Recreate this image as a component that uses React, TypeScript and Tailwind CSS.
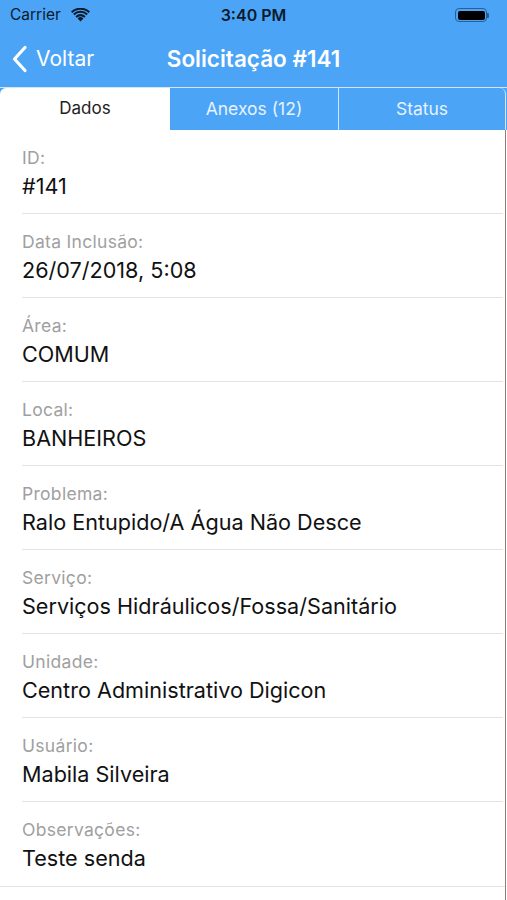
import React from "react";

const rows: { label: string; value: string }[] = [
  { label: "ID:", value: "#141" },
  { label: "Data Inclusão:", value: "26/07/2018, 5:08" },
  { label: "Área:", value: "COMUM" },
  { label: "Local:", value: "BANHEIROS" },
  { label: "Problema:", value: "Ralo Entupido/A Água Não Desce" },
  { label: "Serviço:", value: "Serviços Hidráulicos/Fossa/Sanitário" },
  { label: "Unidade:", value: "Centro Administrativo Digicon" },
  { label: "Usuário:", value: "Mabila Silveira" },
  { label: "Observações:", value: "Teste senda" },
];

function Wifi() {
  return (
    <svg width="19" height="14" viewBox="0 0 19 14">
      <path d="M9.5 13.5 L6.6 10.4 A4.2 4.2 0 0 1 12.4 10.4 Z" fill="#0b1b2b" />
      <path d="M4.4 8.2 A7.3 7.3 0 0 1 14.6 8.2 L13.2 9.7 A5.3 5.3 0 0 0 5.8 9.7 Z" fill="#0b1b2b" />
      <path d="M2.1 5.8 A10.6 10.6 0 0 1 16.9 5.8 L15.5 7.3 A8.6 8.6 0 0 0 3.5 7.3 Z" fill="#0b1b2b" />
      <path d="M0 3.5 A13.7 13.7 0 0 1 19 3.5 L17.6 5 A11.7 11.7 0 0 0 1.4 5 Z" fill="#0b1b2b" />
    </svg>
  );
}

export default function App() {
  return (
    <div
      className="w-[507px] h-[900px] bg-white overflow-hidden flex flex-col"
      style={{ fontFamily: 'Inter, "Liberation Sans", Arial, sans-serif' }}
    >
      <div className="bg-[#4ca4f7] flex flex-col">
        {/* status bar */}
        <div className="h-[30px] flex items-center relative px-[10px]">
          <div className="flex items-center gap-[10px]">
            <span className="text-[15.5px] text-[#0b1b2b]">Carrier</span>
            <Wifi />
          </div>
          <div className="absolute left-0 right-0 top-0 h-[30px] flex items-center justify-center pointer-events-none">
            <span className="text-[16px] font-semibold text-[#0b1b2b]">3:40 PM</span>
          </div>
          <div className="ml-auto mr-[8px] flex items-center">
            <div className="w-[32px] h-[14px] rounded-[4px] border border-[#2a5f96] p-[1.5px]">
              <div className="w-full h-full bg-black rounded-[2px]" />
            </div>
            <div className="w-[2px] h-[5px] bg-[#2a5f96] rounded-r-[1px]" />
          </div>
        </div>
        {/* nav bar */}
        <div className="h-[57px] relative flex items-center">
          <div className="flex items-center pl-[12px] gap-[8px] text-white">
            <svg width="16" height="28" viewBox="0 0 16 28">
              <path d="M13 2.5 L2.5 14 L13 25.5" fill="none" stroke="white" strokeWidth="3.2" strokeLinecap="round" strokeLinejoin="round" />
            </svg>
            <span className="text-[21px]">Voltar</span>
          </div>
          <div className="absolute inset-0 flex items-center justify-center pointer-events-none">
            <span className="text-[22.5px] font-semibold text-white">Solicitação #141</span>
          </div>
        </div>
        {/* tabs */}
        <div className="h-[43px] flex border-t border-[#cfe6fd]">
          <div className="w-[170px] bg-white rounded-tl-[6px] flex items-center justify-center text-[17px] text-[#222]">
            Dados
          </div>
          <div className="w-[169px] border-r border-[#cfe6fd] flex items-center justify-center text-[17.5px] text-[#e6f2fe]">
            Anexos (12)
          </div>
          <div className="w-[167px] border-r border-[#cfe6fd] rounded-tr-[6px] flex items-center justify-center text-[17.5px] text-[#e6f2fe]">
            Status
          </div>
        </div>
      </div>
      <div className="flex-1 flex">
        <div className="w-[505px] flex flex-col">
          {rows.map((r, i) => {
            const last = i === rows.length - 1;
            return (
              <div key={r.label} className={last ? "border-b border-[#e4e4e4]" : ""}>
                <div className={`ml-[22px] mr-[2px] h-[84px] pt-[17px] ${last ? "" : "border-b border-[#e4e4e4]"}`}>
                  <div className="text-[17.5px] tracking-[0.3px] leading-[22px] text-[#a0a0a0]">{r.label}</div>
                  <div className="mt-[4px] text-[21.6px] leading-[26px] text-[#111]">{r.value}</div>
                </div>
              </div>
            );
          })}
        </div>
        <div className="w-[1px] bg-[#9c7474]" />
      </div>
    </div>
  );
}
